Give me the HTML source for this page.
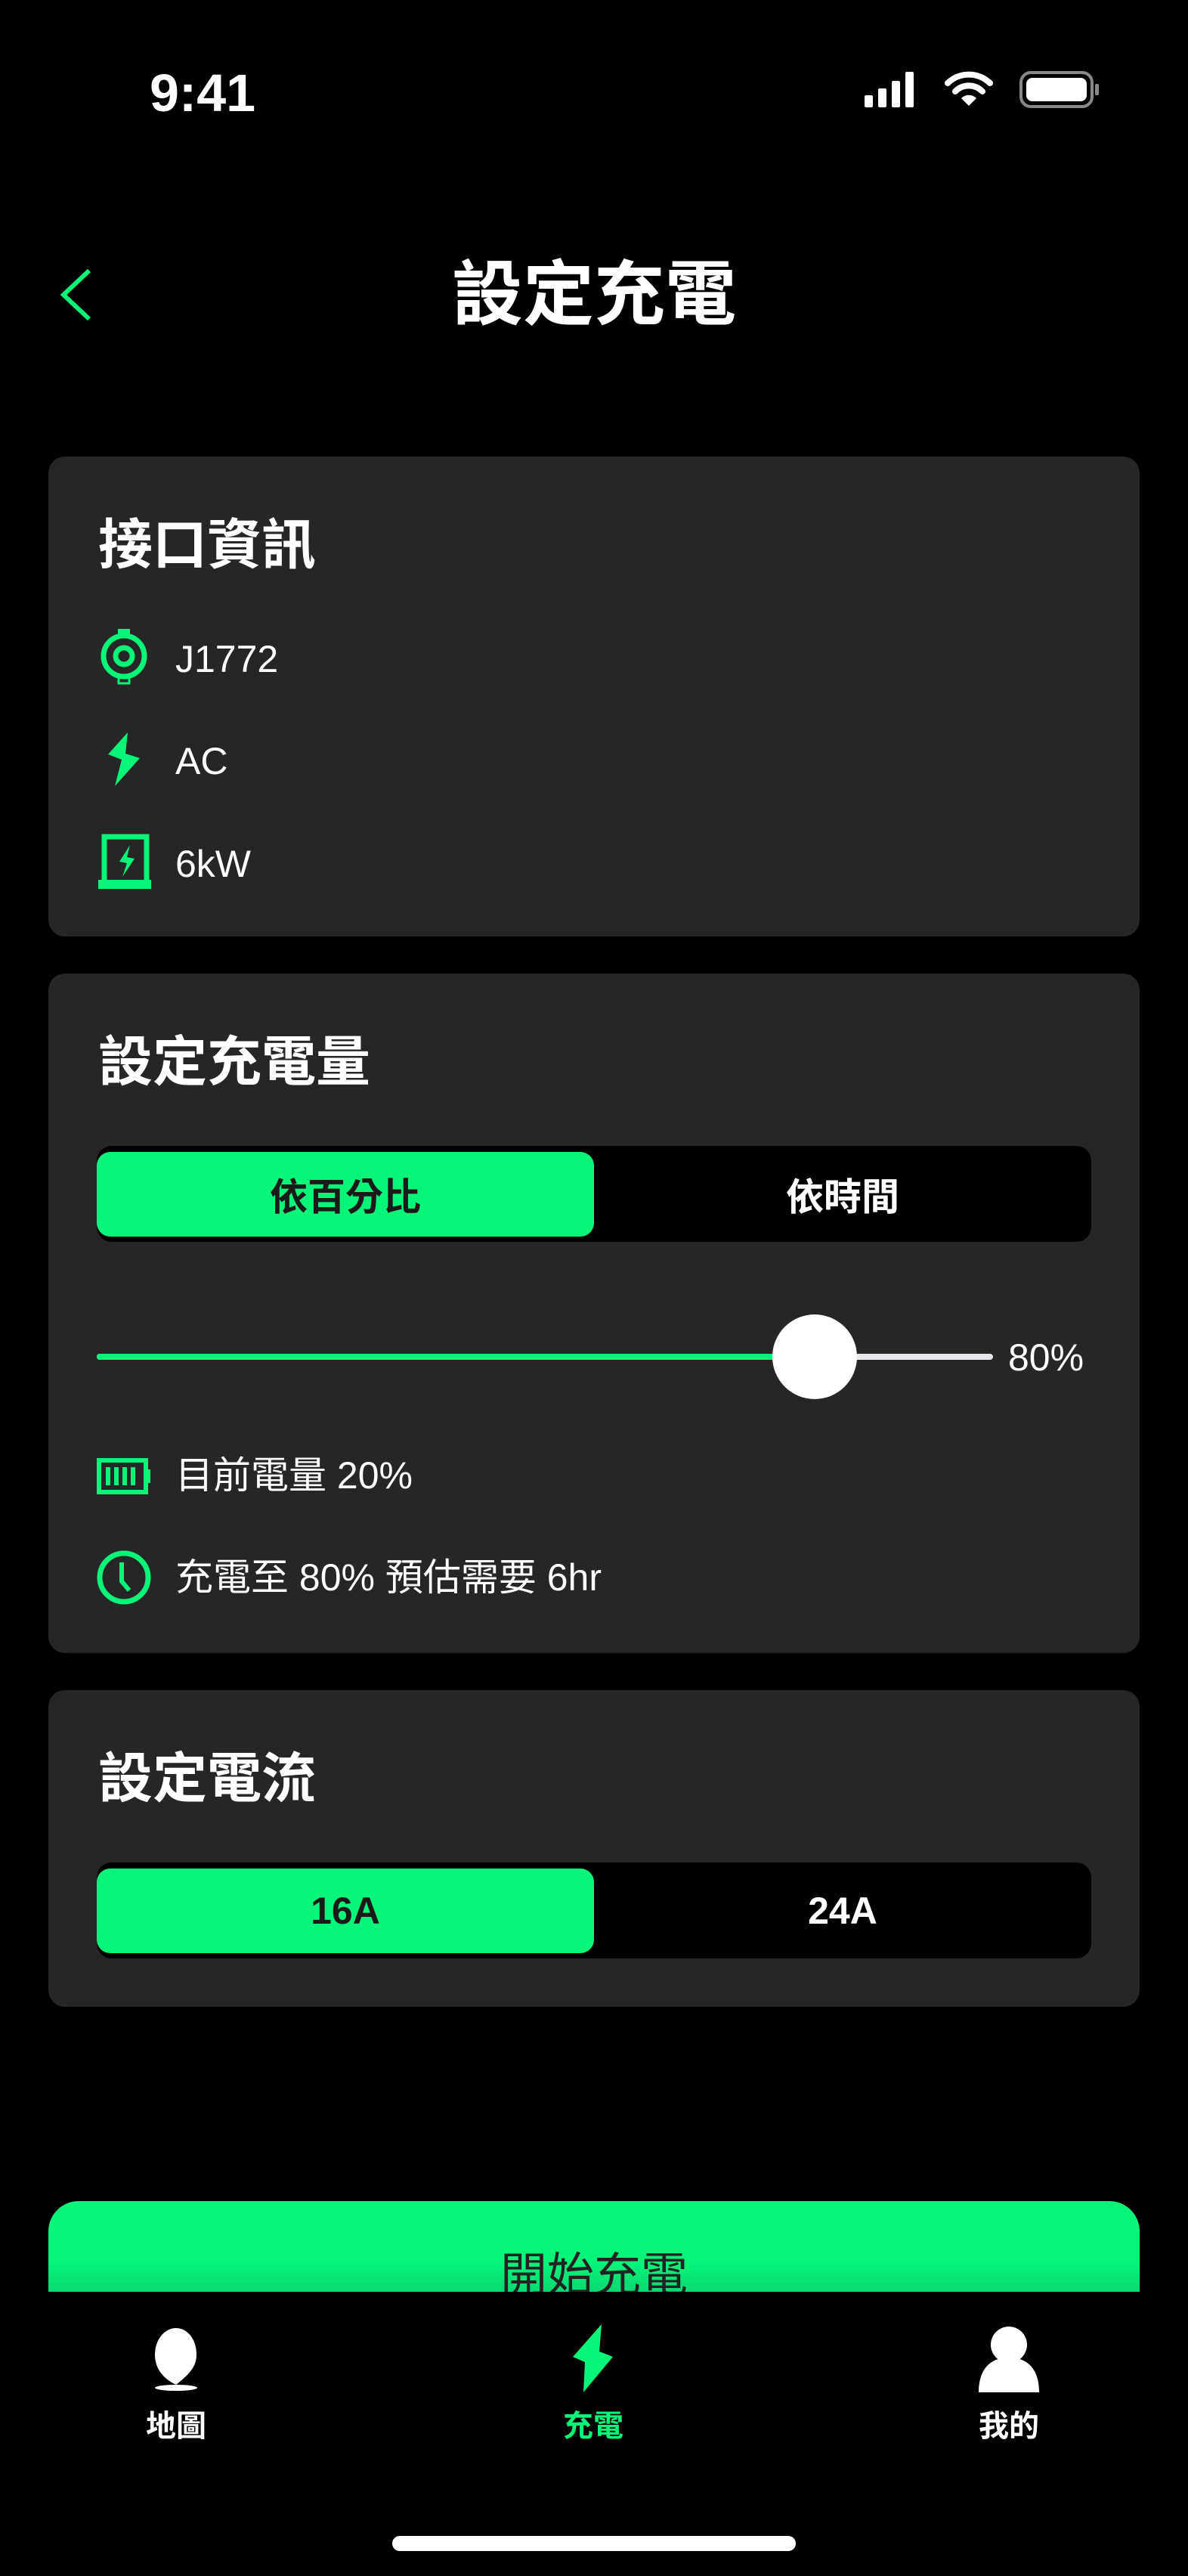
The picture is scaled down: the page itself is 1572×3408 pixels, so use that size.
<!DOCTYPE html>
<html><head><meta charset="utf-8">
<style>
*{margin:0;padding:0;box-sizing:border-box}
html,body{width:1572px;height:3408px;background:#000;overflow:hidden}
body{position:relative;font-family:"Liberation Sans","Noto Sans CJK TC",sans-serif;color:#fff}
.a{position:absolute}
.card{position:absolute;left:64px;width:1444px;background:#262626;border-radius:22px}
.h{position:absolute;left:66px;font-size:72px;font-weight:700;line-height:1}
.row{position:absolute;left:168px;font-size:50px;line-height:1}
.seg{position:absolute;left:64px;width:1316px;height:127px;background:#000;border-radius:20px}
.seg .on{position:absolute;left:0;top:8px;width:658px;height:112px;background:#07F67A;border-radius:18px;color:#1a1a1a}
.seg div{font-weight:700;font-size:50px;display:flex;align-items:center;justify-content:center}
.seg .off{position:absolute;left:658px;top:0;width:658px;height:127px;color:#fff}
.tab{position:absolute;font-size:40px;font-weight:700;width:200px;text-align:center;line-height:1}
</style></head><body>
<div class="a" style="left:198px;top:88px;font-size:70px;font-weight:600;line-height:1">9:41</div>
<svg class="a" style="left:1140px;top:90px" width="320" height="56" viewBox="0 0 320 56">
<rect x="4" y="36" width="11" height="16" rx="2" fill="#fff"/><rect x="22" y="27" width="11" height="25" rx="2" fill="#fff"/><rect x="40" y="17" width="11" height="35" rx="2" fill="#fff"/><rect x="58" y="5" width="11" height="47" rx="2" fill="#fff"/>
<path d="M142 50 L132 40 A14 14 0 0 1 152 40 Z" fill="#fff"/><path d="M114 20 A40 40 0 0 1 170 20" stroke="#fff" stroke-width="8" fill="none" stroke-linecap="round"/><path d="M124 31 A25 25 0 0 1 160 31" stroke="#fff" stroke-width="8" fill="none" stroke-linecap="round"/>
<rect x="211" y="6" width="94" height="45" rx="13" stroke="#888" stroke-width="4" fill="none"/><rect x="218" y="13" width="80" height="31" rx="8" fill="#fff"/><rect x="309" y="21" width="5" height="15" rx="2" fill="#888"/>
</svg>
<svg class="a" style="left:76px;top:354px" width="50" height="72"><path d="M42 4 L8 36 L42 68" stroke="#07F67A" stroke-width="6" fill="none"/></svg>
<div class="a" style="left:0;width:1572px;top:343px;text-align:center;font-size:94px;font-weight:700;line-height:1">設定充電</div>

<div class="card" style="top:604px;height:635px">
<div class="h" style="top:82px">接口資訊</div>
</div>
<svg class="a" style="left:130px;top:830px" width="72" height="350" viewBox="0 0 72 350">
<circle cx="34" cy="38" r="27" stroke="#07F67A" stroke-width="7" fill="none"/><circle cx="34" cy="38" r="11" stroke="#07F67A" stroke-width="7" fill="none"/><rect x="26" y="2" width="16" height="8" fill="#07F67A"/><rect x="27" y="66" width="14" height="8" stroke="#07F67A" stroke-width="3" fill="none"/>
<path d="M39 139 L13 168 L31 175 L22 210 L55 173 L36 167 Z" fill="#07F67A"/>
<rect x="8" y="277" width="56" height="62" stroke="#07F67A" stroke-width="7" fill="none"/><rect x="-2" y="334" width="72" height="12" fill="#07F67A"/>
<path d="M42 288 L28 310 L38 312 L32 330 L48 306 L38 304 Z" fill="#07F67A"/>
</svg>
<div class="row" style="top:847px;left:232px">J1772</div>
<div class="row" style="top:982px;left:232px">AC</div>
<div class="row" style="top:1118px;left:232px">6kW</div>

<div class="card" style="top:1288px;height:899px">
<div class="h" style="top:82px">設定充電量</div>
<div class="seg" style="top:228px"><div class="on">依百分比</div><div class="off">依時間</div></div>
</div>
<div class="a" style="left:128px;top:1791px;width:1186px;height:8px;background:#e6e6ea;border-radius:4px"></div>
<div class="a" style="left:128px;top:1791px;width:930px;height:8px;background:#07F67A;border-radius:4px"></div>
<div class="a" style="left:1022px;top:1739px;width:112px;height:112px;background:#fff;border-radius:50%"></div>
<div class="a" style="left:1334px;top:1771px;font-size:50px;line-height:1">80%</div>
<svg class="a" style="left:126px;top:1924px" width="80" height="200" viewBox="0 0 80 200">
<rect x="5" y="8" width="62" height="42" stroke="#07F67A" stroke-width="6" fill="none"/><rect x="67" y="20" width="6" height="18" fill="#07F67A"/>
<rect x="14" y="17" width="6" height="24" fill="#07F67A"/><rect x="25" y="17" width="6" height="24" fill="#07F67A"/><rect x="36" y="17" width="6" height="24" fill="#07F67A"/><rect x="47" y="17" width="6" height="24" fill="#07F67A"/>
<circle cx="38" cy="163" r="32" stroke="#07F67A" stroke-width="7" fill="none"/><path d="M35 143 V168 L45 180" stroke="#07F67A" stroke-width="6" fill="none"/>
</svg>
<div class="row" style="top:1927px;left:232px">目前電量 20%</div>
<div class="row" style="top:2062px;left:232px">充電至 80% 預估需要 6hr</div>

<div class="card" style="top:2236px;height:419px">
<div class="h" style="top:82px">設定電流</div>
<div class="seg" style="top:228px"><div class="on">16A</div><div class="off">24A</div></div>
</div>

<div class="a" style="left:64px;top:2912px;width:1444px;height:120px;border-radius:40px 40px 0 0;background:linear-gradient(#07F67A 0,#07F67A 80px,#0ad772 120px);overflow:hidden">
<div style="position:absolute;left:0;width:1444px;top:68px;text-align:center;font-size:62px;color:#222;line-height:1">開始充電</div>
</div>

<svg class="a" style="left:200px;top:3075px" width="70" height="92" viewBox="0 0 70 92">
<path d="M33 5 C18 5 5 20 5 40 C5 55 12 70 33 80 C52 65 60 55 60 40 C60 20 48 5 33 5 Z" fill="#fff"/>
<ellipse cx="33" cy="84" rx="28" ry="4" fill="#fff"/>
</svg>
<svg class="a" style="left:755px;top:3073px" width="60" height="94" viewBox="0 0 60 94"><path d="M41 2 L3 45 L19 52 L17 92 L56 45 L38 38 Z" fill="#07F67A"/></svg>
<svg class="a" style="left:1293px;top:3077px" width="84" height="88" viewBox="0 0 84 88">
<ellipse cx="42" cy="25" rx="24" ry="24" fill="#fff"/><path d="M2 88 C2 60 15 42 42 42 C69 42 82 60 82 88 Z" fill="#fff"/>
</svg>
<div class="tab" style="left:133px;top:3190px">地圖</div>
<div class="tab" style="left:685px;top:3190px;color:#07F67A">充電</div>
<div class="tab" style="left:1235px;top:3190px">我的</div>
<div class="a" style="left:519px;top:3355px;width:534px;height:20px;background:#fff;border-radius:10px"></div>
</body></html>
